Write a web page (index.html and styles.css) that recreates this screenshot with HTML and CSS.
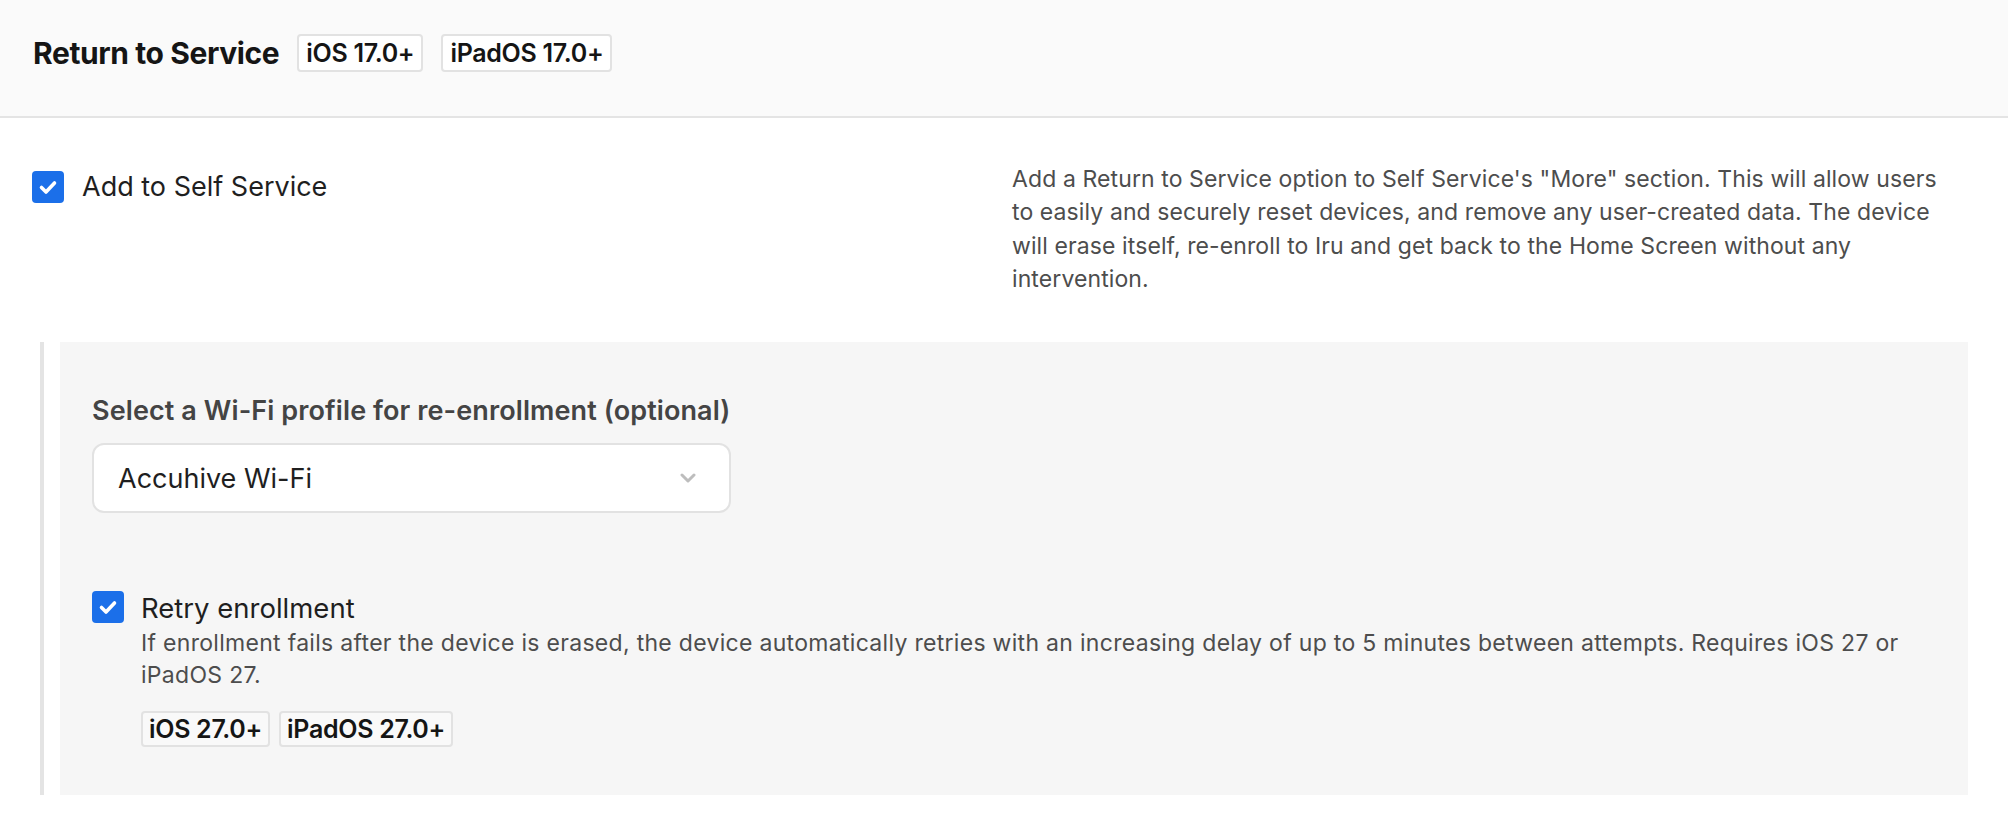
FILE: index.html
```html
<!DOCTYPE html>
<html lang="en">
<head>
<meta charset="utf-8">
<title>Return to Service</title>
<link rel="stylesheet" href="styles.css">
</head>
<body>
<header class="header">
  <h1 class="title">Return to Service</h1>
  <span class="badge">iOS 17.0+</span>
  <span class="badge">iPadOS 17.0+</span>
</header>

<main class="main">
  <div class="row">
    <label class="check-row">
      <span class="checkbox">
        <svg viewBox="0 0 32 32" width="32" height="32"><path d="M9.5 16.5l4.5 4.5 8.5-9" fill="none" stroke="#fff" stroke-width="3.6" stroke-linecap="round" stroke-linejoin="round"/></svg>
      </span>
      <span class="check-label">Add to Self Service</span>
    </label>
    <p class="desc">Add a Return to Service option to Self Service's "More" section. This will allow users to easily and securely reset devices, and remove any user-created data. The device will erase itself, re-enroll to Iru and get back to the Home Screen without any intervention.</p>
  </div>

  <div class="sub">
    <section class="panel">
      <div class="field-label">Select a Wi-Fi profile for re-enrollment (optional)</div>
      <div class="select">
        <span class="select-value">Accuhive Wi-Fi</span>
        <svg class="chevron" viewBox="0 0 16 10" width="16" height="10"><path d="M2 2l6 6 6-6" fill="none" stroke="#bdbdbd" stroke-width="3" stroke-linecap="round" stroke-linejoin="round"/></svg>
      </div>

      <div class="retry">
        <span class="checkbox">
          <svg viewBox="0 0 32 32" width="32" height="32"><path d="M9.5 16.5l4.5 4.5 8.5-9" fill="none" stroke="#fff" stroke-width="3.6" stroke-linecap="round" stroke-linejoin="round"/></svg>
        </span>
        <div class="retry-body">
          <div class="retry-title">Retry enrollment</div>
          <p class="retry-desc">If enrollment fails after the device is erased, the device automatically retries with an increasing delay of up to 5 minutes between attempts. Requires iOS 27 or iPadOS 27.</p>
          <div class="badges">
            <span class="badge small">iOS 27.0+</span>
            <span class="badge small">iPadOS 27.0+</span>
          </div>
        </div>
      </div>
    </section>
  </div>
</main>
</body>
</html>
```

FILE: styles.css
```css
* {
  box-sizing: border-box;
}

body {
  margin: 0;
  background: #ffffff;
  font-family: Inter, "Noto Sans", "Liberation Sans", sans-serif;
  color: #1f1f1f;
}

/* Top bar */
.header {
  height: 118px;
  display: flex;
  align-items: center;
  gap: 18px;
  padding: 0 33px 10px;
  background: #fafafa;
  border-bottom: 2px solid #e4e4e4;
}

.title {
  margin: 0;
  font-size: 30px;
  font-weight: 700;
  letter-spacing: -0.4px;
  color: #151515;
}

.badge {
  display: inline-flex;
  align-items: center;
  height: 38px;
  padding: 0 7px;
  background: #ffffff;
  border: 2px solid #e2e2e2;
  border-radius: 4px;
  font-size: 25px;
  font-weight: 600;
  letter-spacing: -0.3px;
  color: #151515;
}

.badge.small {
  height: 36px;
  padding: 0 6px;
  font-size: 25px;
  background: #f9f9f9;
}

/* Body */
.main {
  padding: 45px 40px 0 32px;
}

.row {
  display: grid;
  grid-template-columns: 960px 942px;
  column-gap: 20px;
}

.check-row {
  display: flex;
  align-items: center;
  gap: 18px;
  align-self: start;
  margin-top: 8px;
}

.checkbox {
  flex: none;
  width: 32px;
  height: 32px;
  border-radius: 4px;
  background: #1b6fe9;
  display: flex;
}

.check-label {
  font-size: 27px;
  line-height: 32px;
  color: #1f1f1f;
}

.desc {
  margin: 0;
  font-size: 23px;
  line-height: 33.3px;
  letter-spacing: 0.1px;
  color: #4d4d4d;
}

/* Nested options */
.sub {
  margin: 46px 0 0 8px;
  padding-left: 16px;
  border-left: 4px solid #e4e4e4;
}

.panel {
  background: #f6f6f6;
  padding: 54px 32px 48px;
}

.field-label {
  font-size: 27px;
  line-height: 30px;
  font-weight: 600;
  color: #444444;
  letter-spacing: 0.1px;
}

.select {
  margin-top: 17px;
  width: 639px;
  height: 70px;
  display: flex;
  align-items: center;
  justify-content: space-between;
  padding: 0 33px 0 24px;
  background: #ffffff;
  border: 2px solid #e2e2e2;
  border-radius: 12px;
}

.select-value {
  font-size: 27px;
  color: #1f1f1f;
}

.retry {
  margin-top: 78px;
  display: flex;
  align-items: flex-start;
  gap: 17px;
}

.retry-title {
  font-size: 27.5px;
  line-height: 34px;
  color: #1f1f1f;
}

.retry-desc {
  margin: 2px 0 0;
  font-size: 23px;
  line-height: 32px;
  letter-spacing: 0.3px;
  color: #4d4d4d;
}

.badges {
  margin-top: 20px;
  display: flex;
  gap: 9px;
}
```
